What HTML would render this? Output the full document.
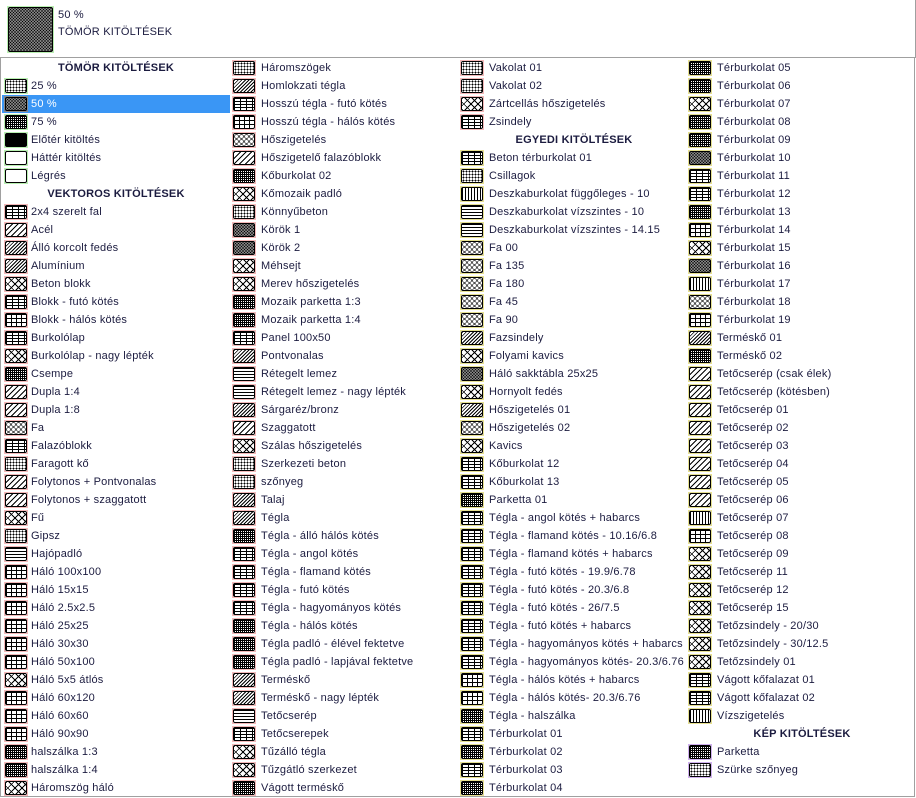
<!DOCTYPE html><html><head><meta charset="utf-8"><style>
*{margin:0;padding:0;box-sizing:border-box}
body{width:916px;height:798px;background:#fff;font-family:"Liberation Sans",sans-serif;font-size:11px;letter-spacing:0.2px;color:#1b1b3f;position:relative;overflow:hidden}
#top{position:absolute;left:0;top:0;width:916px;height:58px;border-bottom:1px solid #a0a0a0;border-right:1px solid #a0a0a0}
#big{position:absolute;left:7px;top:6px;width:47px;height:47px;border:1px solid #b8f0b0;}
#big div{width:100%;height:100%;border:1px solid #000;border-radius:2px;background-color:#fff;background-image:radial-gradient(#000 0.8px,transparent 0.9px),radial-gradient(#000 0.8px,transparent 0.9px);background-size:3px 3px;background-position:0 0,1.5px 1.5px}
#frame{position:absolute;left:0;top:58px;width:915px;height:739px;border-right:1px solid #a0a0a0;border-bottom:1px solid #a0a0a0;border-left:1px solid #a0a0a0}
.col{position:absolute;top:59px;width:228px}
.r{height:18px;line-height:18px;position:relative;padding-left:29px;white-space:nowrap}
.h{height:18px;line-height:18px;text-align:center;font-weight:bold;padding-left:0}
.sel{background:#3a96f5;color:#fff}
.s{position:absolute;left:0;top:1px;width:24px;height:16px;border:1px solid #f4b8b8}
.s b{display:block;width:100%;height:100%;border:1px solid #000;border-radius:2px;background-color:#fff}
.g{border-color:#b8f0b0}.y{border-color:#e6e090}.v{border-color:#d0b0f0}
.d b{background-image:radial-gradient(#000 0.9px,transparent 1px);background-size:3px 3px}
.c b{background-image:radial-gradient(#000 0.8px,transparent 0.9px),radial-gradient(#000 0.8px,transparent 0.9px);background-size:3px 3px;background-position:0 0,1.5px 1.5px}
.k b{background:#000}
.dg b{background-image:repeating-linear-gradient(135deg,#000 0 1px,#fff 1px 4px)}
.dd b{background-image:repeating-linear-gradient(135deg,#000 0 1px,#fff 1px 2.5px)}
.x b{background-image:repeating-linear-gradient(135deg,#000 0 1px,transparent 1px 5px),repeating-linear-gradient(45deg,#000 0 1px,#fff 1px 5px)}
.br b{background-image:linear-gradient(#000 1px,transparent 1px),linear-gradient(90deg,#000 1px,transparent 1px);background-size:100% 3px,6px 3px}
.gr b{background-image:linear-gradient(#000 1px,transparent 1px),linear-gradient(90deg,#000 1px,transparent 1px);background-size:5px 4px}
.hl b{background-image:linear-gradient(#000 1px,transparent 1px);background-size:100% 3px}
.vl b{background-image:linear-gradient(90deg,#000 1px,transparent 1px);background-size:3px 100%}
.w b{background-image:radial-gradient(circle,transparent 1.5px,#000 1.6px,#000 2.2px,transparent 2.3px);background-size:5px 5px}
.fg b{background-image:linear-gradient(#000 1px,transparent 1px),linear-gradient(90deg,#000 1px,transparent 1px);background-size:2px 2px}
</style></head><body>
<div id="top"><div id="big"><div></div></div>
<div style="position:absolute;left:58px;top:8px;line-height:14px">50 %</div>
<div style="position:absolute;left:58px;top:25px;line-height:14px">TÖMÖR KITÖLTÉSEK</div></div>
<div id="frame"></div>

<div class="col" style="left:2px">
<div class="h">TÖMÖR KITÖLTÉSEK</div>
<div class="r"><i class="s g d" style="left:2px"><b></b></i>25 %</div>
<div class="r sel"><i class="s c" style="left:2px;border-color:#888"><b></b></i>50 %</div>
<div class="r"><i class="s g fg" style="left:2px"><b></b></i>75 %</div>
<div class="r"><i class="s g k" style="left:2px"><b></b></i>Előtér kitöltés</div>
<div class="r"><i class="s g" style="left:2px"><b></b></i>Háttér kitöltés</div>
<div class="r"><i class="s g" style="left:2px"><b></b></i>Légrés</div>
<div class="h">VEKTOROS KITÖLTÉSEK</div>
<div class="r"><i class="s br" style="left:2px"><b></b></i>2x4 szerelt fal</div>
<div class="r"><i class="s dg" style="left:2px"><b></b></i>Acél</div>
<div class="r"><i class="s dd" style="left:2px"><b></b></i>Álló korcolt fedés</div>
<div class="r"><i class="s dd" style="left:2px"><b></b></i>Alumínium</div>
<div class="r"><i class="s x" style="left:2px"><b></b></i>Beton blokk</div>
<div class="r"><i class="s br" style="left:2px"><b></b></i>Blokk - futó kötés</div>
<div class="r"><i class="s gr" style="left:2px"><b></b></i>Blokk - hálós kötés</div>
<div class="r"><i class="s br" style="left:2px"><b></b></i>Burkolólap</div>
<div class="r"><i class="s x" style="left:2px"><b></b></i>Burkolólap - nagy lépték</div>
<div class="r"><i class="s fg" style="left:2px"><b></b></i>Csempe</div>
<div class="r"><i class="s dg" style="left:2px"><b></b></i>Dupla 1:4</div>
<div class="r"><i class="s dg" style="left:2px"><b></b></i>Dupla 1:8</div>
<div class="r"><i class="s w" style="left:2px"><b></b></i>Fa</div>
<div class="r"><i class="s br" style="left:2px"><b></b></i>Falazóblokk</div>
<div class="r"><i class="s d" style="left:2px"><b></b></i>Faragott kő</div>
<div class="r"><i class="s dg" style="left:2px"><b></b></i>Folytonos + Pontvonalas</div>
<div class="r"><i class="s dg" style="left:2px"><b></b></i>Folytonos + szaggatott</div>
<div class="r"><i class="s x" style="left:2px"><b></b></i>Fű</div>
<div class="r"><i class="s d" style="left:2px"><b></b></i>Gipsz</div>
<div class="r"><i class="s hl" style="left:2px"><b></b></i>Hajópadló</div>
<div class="r"><i class="s gr" style="left:2px"><b></b></i>Háló 100x100</div>
<div class="r"><i class="s gr" style="left:2px"><b></b></i>Háló 15x15</div>
<div class="r"><i class="s gr" style="left:2px"><b></b></i>Háló 2.5x2.5</div>
<div class="r"><i class="s gr" style="left:2px"><b></b></i>Háló 25x25</div>
<div class="r"><i class="s gr" style="left:2px"><b></b></i>Háló 30x30</div>
<div class="r"><i class="s gr" style="left:2px"><b></b></i>Háló 50x100</div>
<div class="r"><i class="s x" style="left:2px"><b></b></i>Háló 5x5 átlós</div>
<div class="r"><i class="s gr" style="left:2px"><b></b></i>Háló 60x120</div>
<div class="r"><i class="s gr" style="left:2px"><b></b></i>Háló 60x60</div>
<div class="r"><i class="s gr" style="left:2px"><b></b></i>Háló 90x90</div>
<div class="r"><i class="s fg" style="left:2px"><b></b></i>halszálka 1:3</div>
<div class="r"><i class="s fg" style="left:2px"><b></b></i>halszálka 1:4</div>
<div class="r"><i class="s x" style="left:2px"><b></b></i>Háromszög háló</div>
</div>

<div class="col" style="left:232px">
<div class="r"><i class="s d"><b></b></i>Háromszögek</div>
<div class="r"><i class="s dd"><b></b></i>Homlokzati tégla</div>
<div class="r"><i class="s br"><b></b></i>Hosszú tégla - futó kötés</div>
<div class="r"><i class="s gr"><b></b></i>Hosszú tégla - hálós kötés</div>
<div class="r"><i class="s w"><b></b></i>Hőszigetelés</div>
<div class="r"><i class="s dg"><b></b></i>Hőszigetelő falazóblokk</div>
<div class="r"><i class="s fg"><b></b></i>Kőburkolat 02</div>
<div class="r"><i class="s x"><b></b></i>Kőmozaik padló</div>
<div class="r"><i class="s d"><b></b></i>Könnyűbeton</div>
<div class="r"><i class="s c"><b></b></i>Körök 1</div>
<div class="r"><i class="s c"><b></b></i>Körök 2</div>
<div class="r"><i class="s x"><b></b></i>Méhsejt</div>
<div class="r"><i class="s x"><b></b></i>Merev hőszigetelés</div>
<div class="r"><i class="s fg"><b></b></i>Mozaik parketta 1:3</div>
<div class="r"><i class="s fg"><b></b></i>Mozaik parketta 1:4</div>
<div class="r"><i class="s br"><b></b></i>Panel 100x50</div>
<div class="r"><i class="s dd"><b></b></i>Pontvonalas</div>
<div class="r"><i class="s hl"><b></b></i>Rétegelt lemez</div>
<div class="r"><i class="s hl"><b></b></i>Rétegelt lemez - nagy lépték</div>
<div class="r"><i class="s dd"><b></b></i>Sárgaréz/bronz</div>
<div class="r"><i class="s dg"><b></b></i>Szaggatott</div>
<div class="r"><i class="s x"><b></b></i>Szálas hőszigetelés</div>
<div class="r"><i class="s d"><b></b></i>Szerkezeti beton</div>
<div class="r"><i class="s d"><b></b></i>szőnyeg</div>
<div class="r"><i class="s dd"><b></b></i>Talaj</div>
<div class="r"><i class="s dd"><b></b></i>Tégla</div>
<div class="r"><i class="s fg"><b></b></i>Tégla - álló hálós kötés</div>
<div class="r"><i class="s br"><b></b></i>Tégla - angol kötés</div>
<div class="r"><i class="s br"><b></b></i>Tégla - flamand kötés</div>
<div class="r"><i class="s br"><b></b></i>Tégla - futó kötés</div>
<div class="r"><i class="s br"><b></b></i>Tégla - hagyományos kötés</div>
<div class="r"><i class="s fg"><b></b></i>Tégla - hálós kötés</div>
<div class="r"><i class="s fg"><b></b></i>Tégla padló - élével fektetve</div>
<div class="r"><i class="s fg"><b></b></i>Tégla padló - lapjával fektetve</div>
<div class="r"><i class="s dd"><b></b></i>Terméskő</div>
<div class="r"><i class="s dd"><b></b></i>Terméskő - nagy lépték</div>
<div class="r"><i class="s hl"><b></b></i>Tetőcserép</div>
<div class="r"><i class="s br"><b></b></i>Tetőcserepek</div>
<div class="r"><i class="s x"><b></b></i>Tűzálló tégla</div>
<div class="r"><i class="s x"><b></b></i>Tűzgátló szerkezet</div>
<div class="r"><i class="s fg"><b></b></i>Vágott terméskő</div>
</div>

<div class="col" style="left:460px">
<div class="r"><i class="s d"><b></b></i>Vakolat 01</div>
<div class="r"><i class="s d"><b></b></i>Vakolat 02</div>
<div class="r"><i class="s x"><b></b></i>Zártcellás hőszigetelés</div>
<div class="r"><i class="s br"><b></b></i>Zsindely</div>
<div class="h">EGYEDI KITÖLTÉSEK</div>
<div class="r"><i class="s y br"><b></b></i>Beton térburkolat 01</div>
<div class="r"><i class="s y d"><b></b></i>Csillagok</div>
<div class="r"><i class="s y vl"><b></b></i>Deszkaburkolat függőleges - 10</div>
<div class="r"><i class="s y hl"><b></b></i>Deszkaburkolat vízszintes - 10</div>
<div class="r"><i class="s y hl"><b></b></i>Deszkaburkolat vízszintes - 14.15</div>
<div class="r"><i class="s y w"><b></b></i>Fa 00</div>
<div class="r"><i class="s y w"><b></b></i>Fa 135</div>
<div class="r"><i class="s y w"><b></b></i>Fa 180</div>
<div class="r"><i class="s y w"><b></b></i>Fa 45</div>
<div class="r"><i class="s y w"><b></b></i>Fa 90</div>
<div class="r"><i class="s y dd"><b></b></i>Fazsindely</div>
<div class="r"><i class="s y x"><b></b></i>Folyami kavics</div>
<div class="r"><i class="s y c"><b></b></i>Háló sakktábla 25x25</div>
<div class="r"><i class="s y x"><b></b></i>Hornyolt fedés</div>
<div class="r"><i class="s y dd"><b></b></i>Hőszigetelés 01</div>
<div class="r"><i class="s y w"><b></b></i>Hőszigetelés 02</div>
<div class="r"><i class="s y x"><b></b></i>Kavics</div>
<div class="r"><i class="s y br"><b></b></i>Kőburkolat 12</div>
<div class="r"><i class="s y br"><b></b></i>Kőburkolat 13</div>
<div class="r"><i class="s y fg"><b></b></i>Parketta 01</div>
<div class="r"><i class="s y br"><b></b></i>Tégla - angol kötés + habarcs</div>
<div class="r"><i class="s y br"><b></b></i>Tégla - flamand kötés - 10.16/6.8</div>
<div class="r"><i class="s y br"><b></b></i>Tégla - flamand kötés + habarcs</div>
<div class="r"><i class="s y br"><b></b></i>Tégla - futó kötés - 19.9/6.78</div>
<div class="r"><i class="s y br"><b></b></i>Tégla - futó kötés - 20.3/6.8</div>
<div class="r"><i class="s y br"><b></b></i>Tégla - futó kötés - 26/7.5</div>
<div class="r"><i class="s y br"><b></b></i>Tégla - futó kötés + habarcs</div>
<div class="r"><i class="s y br"><b></b></i>Tégla - hagyományos kötés + habarcs</div>
<div class="r"><i class="s y br"><b></b></i>Tégla - hagyományos kötés- 20.3/6.76</div>
<div class="r"><i class="s y gr"><b></b></i>Tégla - hálós kötés + habarcs</div>
<div class="r"><i class="s y gr"><b></b></i>Tégla - hálós kötés- 20.3/6.76</div>
<div class="r"><i class="s y fg"><b></b></i>Tégla - halszálka</div>
<div class="r"><i class="s y br"><b></b></i>Térburkolat 01</div>
<div class="r"><i class="s y fg"><b></b></i>Térburkolat 02</div>
<div class="r"><i class="s y br"><b></b></i>Térburkolat 03</div>
<div class="r"><i class="s y fg"><b></b></i>Térburkolat 04</div>
</div>

<div class="col" style="left:688px">
<div class="r"><i class="s y fg"><b></b></i>Térburkolat 05</div>
<div class="r"><i class="s y fg"><b></b></i>Térburkolat 06</div>
<div class="r"><i class="s y x"><b></b></i>Térburkolat 07</div>
<div class="r"><i class="s y fg"><b></b></i>Térburkolat 08</div>
<div class="r"><i class="s y fg"><b></b></i>Térburkolat 09</div>
<div class="r"><i class="s y c"><b></b></i>Térburkolat 10</div>
<div class="r"><i class="s y br"><b></b></i>Térburkolat 11</div>
<div class="r"><i class="s y br"><b></b></i>Térburkolat 12</div>
<div class="r"><i class="s y fg"><b></b></i>Térburkolat 13</div>
<div class="r"><i class="s y gr"><b></b></i>Térburkolat 14</div>
<div class="r"><i class="s y x"><b></b></i>Térburkolat 15</div>
<div class="r"><i class="s y c"><b></b></i>Térburkolat 16</div>
<div class="r"><i class="s y vl"><b></b></i>Térburkolat 17</div>
<div class="r"><i class="s y w"><b></b></i>Térburkolat 18</div>
<div class="r"><i class="s y gr"><b></b></i>Térburkolat 19</div>
<div class="r"><i class="s y dd"><b></b></i>Terméskő 01</div>
<div class="r"><i class="s y fg"><b></b></i>Terméskő 02</div>
<div class="r"><i class="s y dg"><b></b></i>Tetőcserép (csak élek)</div>
<div class="r"><i class="s y dg"><b></b></i>Tetőcserép (kötésben)</div>
<div class="r"><i class="s y dg"><b></b></i>Tetőcserép 01</div>
<div class="r"><i class="s y dg"><b></b></i>Tetőcserép 02</div>
<div class="r"><i class="s y dg"><b></b></i>Tetőcserép 03</div>
<div class="r"><i class="s y dg"><b></b></i>Tetőcserép 04</div>
<div class="r"><i class="s y dg"><b></b></i>Tetőcserép 05</div>
<div class="r"><i class="s y dg"><b></b></i>Tetőcserép 06</div>
<div class="r"><i class="s y vl"><b></b></i>Tetőcserép 07</div>
<div class="r"><i class="s y gr"><b></b></i>Tetőcserép 08</div>
<div class="r"><i class="s y x"><b></b></i>Tetőcserép 09</div>
<div class="r"><i class="s y x"><b></b></i>Tetőcserép 11</div>
<div class="r"><i class="s y x"><b></b></i>Tetőcserép 12</div>
<div class="r"><i class="s y x"><b></b></i>Tetőcserép 15</div>
<div class="r"><i class="s y x"><b></b></i>Tetőzsindely - 20/30</div>
<div class="r"><i class="s y x"><b></b></i>Tetőzsindely - 30/12.5</div>
<div class="r"><i class="s y x"><b></b></i>Tetőzsindely 01</div>
<div class="r"><i class="s y br"><b></b></i>Vágott kőfalazat 01</div>
<div class="r"><i class="s y br"><b></b></i>Vágott kőfalazat 02</div>
<div class="r"><i class="s y vl"><b></b></i>Vízszigetelés</div>
<div class="h">KÉP KITÖLTÉSEK</div>
<div class="r"><i class="s v fg"><b></b></i>Parketta</div>
<div class="r"><i class="s v d"><b></b></i>Szürke szőnyeg</div>
</div>
</body></html>
